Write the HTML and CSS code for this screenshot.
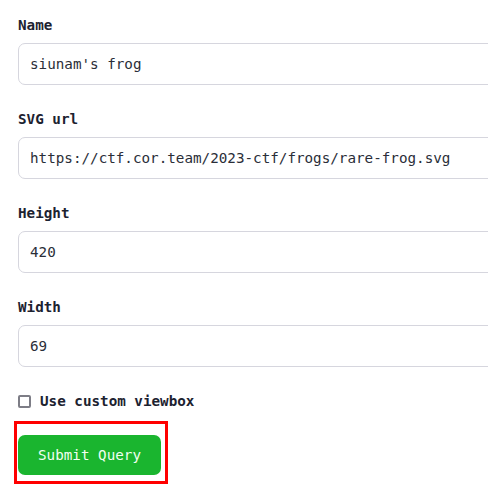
FILE: index.html
```html
<!DOCTYPE html>
<html>
<head>
<meta charset="utf-8">
<link rel="stylesheet" href="styles.css">
</head>
<body>
<form class="form">
  <div class="field">
    <label class="label">Name</label>
    <input class="input" type="text" value="siunam's frog">
  </div>
  <div class="field">
    <label class="label">SVG url</label>
    <input class="input" type="text" value="https://ctf.cor.team/2023-ctf/frogs/rare-frog.svg">
  </div>
  <div class="field">
    <label class="label">Height</label>
    <input class="input" type="text" value="420">
  </div>
  <div class="field">
    <label class="label">Width</label>
    <input class="input" type="text" value="69">
  </div>
  <label class="check">
    <span class="box"></span>
    <span>Use custom viewbox</span>
  </label>
  <div class="highlight">
    <button class="submit" type="button">Submit Query</button>
  </div>
</form>
</body>
</html>
```
FILE: styles.css
```css
html, body {
  margin: 0;
  padding: 0;
  overflow: hidden;
  background: #ffffff;
}
body {
  font-family: "DejaVu Sans Mono", "Liberation Mono", monospace;
  font-size: 14.25px;
  color: #1c2230;
}
.form {
  width: 560px;
  padding: 16px 0 0 18px;
  display: flex;
  flex-direction: column;
}
.field {
  display: flex;
  flex-direction: column;
  margin-bottom: 25px;
}
.label {
  font-weight: bold;
  line-height: 18px;
  margin-bottom: 9px;
}
.input {
  box-sizing: border-box;
  width: 100%;
  height: 42px;
  margin: 0;
  padding: 0 11px;
  border: 1px solid #d6d6de;
  border-radius: 7px;
  background: #ffffff;
  font-family: "DejaVu Sans Mono", "Liberation Mono", monospace;
  font-size: 14.25px;
  color: #2a2e38;
  outline: none;
}
.check {
  display: flex;
  align-items: center;
  gap: 9px;
  font-weight: bold;
  line-height: 18px;
  height: 18px;
}
.box {
  box-sizing: border-box;
  width: 13px;
  height: 13px;
  border: 2px solid #7d7d86;
  border-radius: 2px;
  background: #fff;
}
.highlight {
  align-self: flex-start;
  margin: 11px 0 0 -4px;
  border: 3px solid #ff0000;
  padding: 11px 4px 6px 1px;
}
.submit {
  display: block;
  height: 40px;
  width: 143px;
  padding: 0;
  border: none;
  border-radius: 7px;
  background: #1ab52f;
  color: #f2fff2;
  font-family: inherit;
  font-size: 14.25px;
  cursor: pointer;
}
```
